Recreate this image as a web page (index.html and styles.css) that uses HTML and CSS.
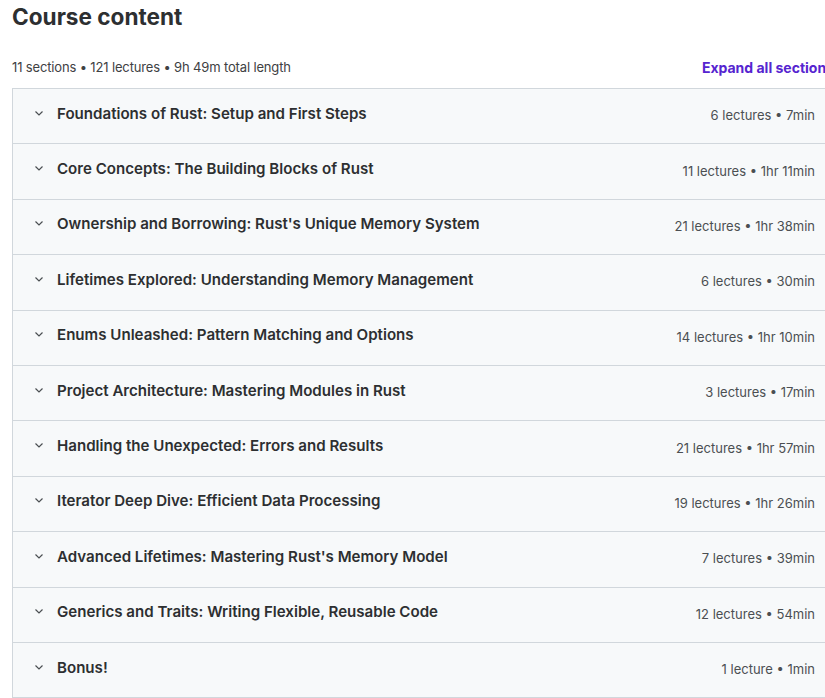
FILE: index.html
```html
<!DOCTYPE html>
<html lang="en">
<head>
    <meta charset="UTF-8">
    <meta name="viewport" content="width=device-width, initial-scale=1.0">
    <title>Course content</title>
    <link rel="stylesheet" href="styles.css">
</head>
<body>
    <div class="course-content">
        <h2 class="heading">Course content</h2>

        <div class="summary">
            <span class="summary-text">11 sections • 121 lectures • 9h 49m total length</span>
            <a href="#" class="expand-all">Expand all sections</a>
        </div>

        <div class="sections">
            <div class="section">
                <div class="section-title"><span class="chevron"><svg viewBox="0 0 8 5" width="8" height="5"><path d="M0.5 0.5l3.5 3.5 3.5-3.5" fill="none" stroke="currentColor" stroke-width="1.2"/></svg></span>Foundations of Rust: Setup and First Steps</div>
                <div class="section-meta">6 lectures • 7min</div>
            </div>
            <div class="section">
                <div class="section-title"><span class="chevron"><svg viewBox="0 0 8 5" width="8" height="5"><path d="M0.5 0.5l3.5 3.5 3.5-3.5" fill="none" stroke="currentColor" stroke-width="1.2"/></svg></span>Core Concepts: The Building Blocks of Rust</div>
                <div class="section-meta">11 lectures • 1hr 11min</div>
            </div>
            <div class="section">
                <div class="section-title"><span class="chevron"><svg viewBox="0 0 8 5" width="8" height="5"><path d="M0.5 0.5l3.5 3.5 3.5-3.5" fill="none" stroke="currentColor" stroke-width="1.2"/></svg></span>Ownership and Borrowing: Rust's Unique Memory System</div>
                <div class="section-meta">21 lectures • 1hr 38min</div>
            </div>
            <div class="section">
                <div class="section-title"><span class="chevron"><svg viewBox="0 0 8 5" width="8" height="5"><path d="M0.5 0.5l3.5 3.5 3.5-3.5" fill="none" stroke="currentColor" stroke-width="1.2"/></svg></span>Lifetimes Explored: Understanding Memory Management</div>
                <div class="section-meta">6 lectures • 30min</div>
            </div>
            <div class="section">
                <div class="section-title"><span class="chevron"><svg viewBox="0 0 8 5" width="8" height="5"><path d="M0.5 0.5l3.5 3.5 3.5-3.5" fill="none" stroke="currentColor" stroke-width="1.2"/></svg></span>Enums Unleashed: Pattern Matching and Options</div>
                <div class="section-meta">14 lectures • 1hr 10min</div>
            </div>
            <div class="section">
                <div class="section-title"><span class="chevron"><svg viewBox="0 0 8 5" width="8" height="5"><path d="M0.5 0.5l3.5 3.5 3.5-3.5" fill="none" stroke="currentColor" stroke-width="1.2"/></svg></span>Project Architecture: Mastering Modules in Rust</div>
                <div class="section-meta">3 lectures • 17min</div>
            </div>
            <div class="section">
                <div class="section-title"><span class="chevron"><svg viewBox="0 0 8 5" width="8" height="5"><path d="M0.5 0.5l3.5 3.5 3.5-3.5" fill="none" stroke="currentColor" stroke-width="1.2"/></svg></span>Handling the Unexpected: Errors and Results</div>
                <div class="section-meta">21 lectures • 1hr 57min</div>
            </div>
            <div class="section">
                <div class="section-title"><span class="chevron"><svg viewBox="0 0 8 5" width="8" height="5"><path d="M0.5 0.5l3.5 3.5 3.5-3.5" fill="none" stroke="currentColor" stroke-width="1.2"/></svg></span>Iterator Deep Dive: Efficient Data Processing</div>
                <div class="section-meta">19 lectures • 1hr 26min</div>
            </div>
            <div class="section">
                <div class="section-title"><span class="chevron"><svg viewBox="0 0 8 5" width="8" height="5"><path d="M0.5 0.5l3.5 3.5 3.5-3.5" fill="none" stroke="currentColor" stroke-width="1.2"/></svg></span>Advanced Lifetimes: Mastering Rust's Memory Model</div>
                <div class="section-meta">7 lectures • 39min</div>
            </div>
            <div class="section">
                <div class="section-title"><span class="chevron"><svg viewBox="0 0 8 5" width="8" height="5"><path d="M0.5 0.5l3.5 3.5 3.5-3.5" fill="none" stroke="currentColor" stroke-width="1.2"/></svg></span>Generics and Traits: Writing Flexible, Reusable Code</div>
                <div class="section-meta">12 lectures • 54min</div>
            </div>
            <div class="section">
                <div class="section-title"><span class="chevron"><svg viewBox="0 0 8 5" width="8" height="5"><path d="M0.5 0.5l3.5 3.5 3.5-3.5" fill="none" stroke="currentColor" stroke-width="1.2"/></svg></span>Bonus!</div>
                <div class="section-meta">1 lecture • 1min</div>
            </div>
        </div>
    </div>
</body>
</html>
```

FILE: styles.css
```css
html, body {
    overflow: hidden;
}

body {
    font-family: Inter, "Noto Sans", sans-serif;
    color: #2d2f31;
    margin: 0;
    padding: 0 0 0 12px;
    background-color: #fff;
}

.course-content {
    width: 822px;
}

.heading {
    font-size: 22.6px;
    font-weight: 700;
    line-height: 34px;
    margin: 0;
}

.summary {
    display: flex;
    justify-content: space-between;
    align-items: center;
    margin-top: 20px;
    margin-bottom: 8px;
    height: 26px;
}

.summary-text {
    font-size: 13px;
    letter-spacing: -0.15px;
    color: #3e4143;
}

.expand-all {
    font-size: 14px;
    font-weight: 700;
    color: #5624d0;
    text-decoration: none;
}

.sections {
    border: 1px solid #d1d7dc;
}

.section {
    display: flex;
    justify-content: space-between;
    align-items: center;
    height: 54.4px;
    padding: 0 18px 0 22px;
    background-color: #f7f9fa;
    border-bottom: 1px solid #d1d7dc;
}

.section:last-child {
    border-bottom: none;
}

.section-title {
    display: flex;
    align-items: center;
    font-size: 15.1px;
    font-weight: 600;
    margin-top: -6px;
}

.chevron {
    display: flex;
    width: 22px;
    color: #4b4f52;
}

.section-meta {
    font-size: 13px;
    color: #4b4f52;
    margin-top: -2px;
}
```
